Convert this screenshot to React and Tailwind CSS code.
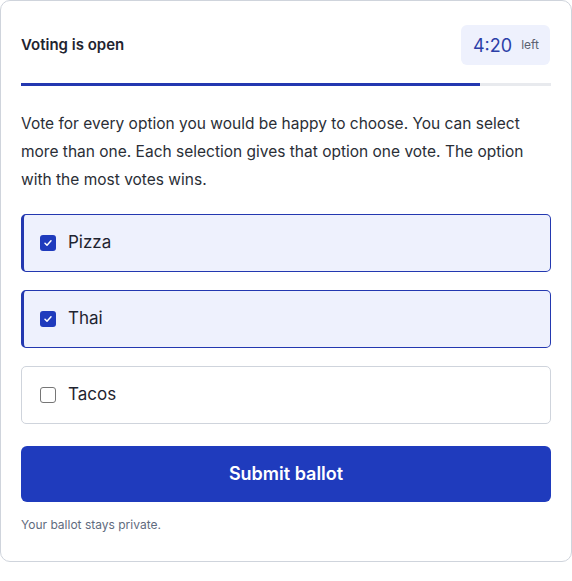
import React, { useState } from 'react';

const options = [
  { name: 'Pizza', checked: true },
  { name: 'Thai', checked: true },
  { name: 'Tacos', checked: false },
];

const Check = ({ on }) =>
  on ? (
    <span className="w-4 h-4 rounded-[3px] bg-[#1f3bbd] flex items-center justify-center shrink-0">
      <svg width="10" height="10" viewBox="0 0 10 10" fill="none">
        <path d="M2 5.2l2 2 4-4.4" stroke="white" strokeWidth="1.5" strokeLinecap="round" strokeLinejoin="round" />
      </svg>
    </span>
  ) : (
    <span className="w-4 h-4 rounded-[3px] border border-[#767676] bg-white shrink-0" />
  );

const App = () => {
  const [picked, setPicked] = useState(options.map((o) => o.checked));

  return (
    <div className="w-[572px] h-[581px] bg-white" style={{ fontFamily: 'Inter, "Noto Sans", sans-serif' }}>
      <div className="w-[572px] h-[562px] border border-[#cfd4dc] rounded-[10px] px-5 pt-6">
        <div className="flex items-center justify-between">
          <h2 className="text-[15px] font-semibold text-[#1f2430]">Voting is open</h2>
          <div className="h-10 pl-3 pr-[11px] rounded-md bg-[#eef1fd] flex items-center gap-[9px] mr-px">
            <span className="text-[18px] text-[#2c3fa8]">4:20</span>
            <span className="text-xs text-[#5b6170]">left</span>
          </div>
        </div>
        <div className="mt-[18px] h-[3px] bg-[#e8eaee]">
          <div className="h-full w-[459px] bg-[#2338b0]" />
        </div>
        <p className="mt-6 text-[15.5px] leading-7 text-[#2a2e36]">
          Vote for every option you would be happy to choose. You can select more than one. Each selection gives that option one vote. The option with the most votes wins.
        </p>
        <div className="mt-5 flex flex-col gap-[18px]">
          {options.map((o, i) => (
            <button
              key={o.name}
              onClick={() => setPicked(picked.map((p, j) => (j === i ? !p : p)))}
              className={
                picked[i]
                  ? 'h-[58px] flex items-center gap-3 pl-[16px] rounded-[5px] border border-[#2338b0] border-l-[3px] bg-[#eef1fd] text-left'
                  : 'h-[58px] flex items-center gap-3 pl-[18px] rounded-[5px] border border-[#cfd4dc] bg-white text-left'
              }
            >
              <Check on={picked[i]} />
              <span className="text-[17px] text-[#1f2430]">{o.name}</span>
            </button>
          ))}
        </div>
        <button className="mt-[22px] w-full h-14 rounded-md bg-[#1f3bbd] text-white text-lg font-semibold">
          Submit ballot
        </button>
        <p className="mt-[15px] text-xs text-[#5f6b7e]">Your ballot stays private.</p>
      </div>
    </div>
  );
};

export default App;
